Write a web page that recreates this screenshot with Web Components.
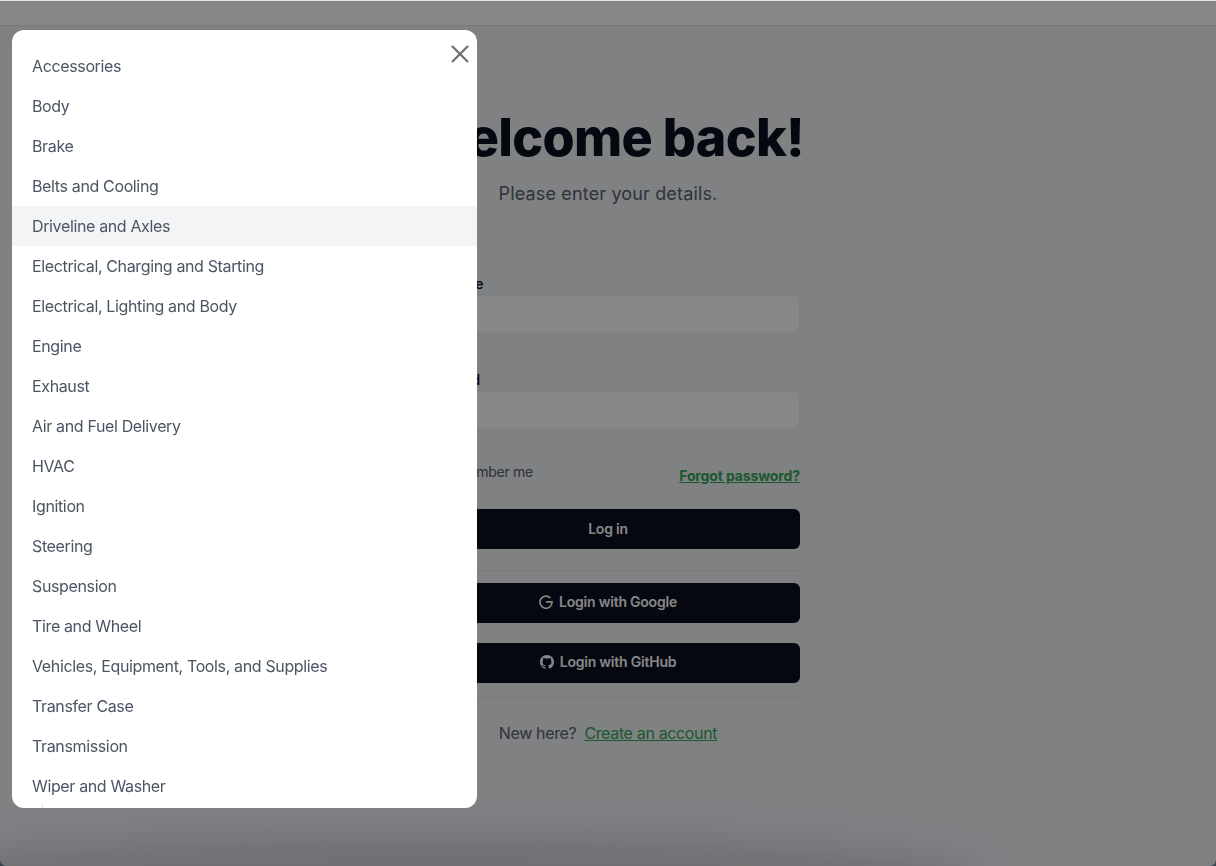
<!DOCTYPE html>
<html lang="en">
<head>
<meta charset="utf-8">
<title>Welcome back</title>
<style>
  html, body { margin: 0; height: 100%; overflow: hidden; }
  body { font-family: Inter, "Liberation Sans", sans-serif; background: #f1f3f8; }
</style>
</head>
<body>
<login-page></login-page>
<part-menu></part-menu>

<script>
const PARTS = [
  "Accessories", "Body", "Brake", "Belts and Cooling", "Driveline and Axles",
  "Electrical, Charging and Starting", "Electrical, Lighting and Body", "Engine",
  "Exhaust", "Air and Fuel Delivery", "HVAC", "Ignition", "Steering", "Suspension",
  "Tire and Wheel", "Vehicles, Equipment, Tools, and Supplies", "Transfer Case",
  "Transmission", "Wiper and Washer"
];

class LoginButton extends HTMLElement {
  constructor() {
    super();
    this.attachShadow({ mode: "open" });
    this.shadowRoot.innerHTML = `
      <style>
        :host { display: flex; box-sizing: border-box; align-items: center; justify-content: center; gap: 6px;
          height: 40px; padding-bottom: 3px; border-radius: 6px; background: #0a0e20; color: #fff;
          font-size: 14px; font-weight: 600; letter-spacing: -0.22px; }
        ::slotted(svg) { width: 14px; height: 14px; margin-top: 1px; }
      </style>
      <slot name="icon"></slot><span><slot></slot></span>
    `;
  }
}

class TextField extends HTMLElement {
  constructor() {
    super();
    this.attachShadow({ mode: "open" });
    this.shadowRoot.innerHTML = `
      <style>
        :host { display: block; }
        label { display: block; margin-bottom: 1px; font-size: 14px; line-height: 20px; font-weight: 500;
          letter-spacing: -0.2px; color: #0a0e20; }
        .box { height: 37px; border: 1px solid #edeef1; border-radius: 6px; background: #ffffff; }
      </style>
      <label><slot></slot></label>
      <div class="box"></div>
    `;
  }
}

class LoginForm extends HTMLElement {
  constructor() {
    super();
    this.attachShadow({ mode: "open" });
    this.shadowRoot.innerHTML = `
      <style>
        :host { display: block; width: 384px; }
        h1 { margin: 0; font-size: 52px; line-height: 56px; font-weight: 800;
          letter-spacing: -0.7px; color: #0a0e20; text-align: center; white-space: nowrap; }
        p { margin: 0; color: #586070; }
        .sub { margin-top: 14px; font-size: 18px; line-height: 28px; letter-spacing: 0.15px; text-align: center; }
        text-field { margin-top: 66px; }
        text-field + text-field { margin-top: 36px; }
        .row { display: flex; justify-content: space-between; margin-top: 32px; height: 24px; }
        .remember { display: flex; gap: 8px; font-size: 14px; line-height: 20px; letter-spacing: -0.28px; color: #586070; }
        .check { box-sizing: border-box; width: 16px; height: 16px; margin-top: 2px; border: 1px solid #d1d5db; border-radius: 3px; }
        a { color: #32a858; text-decoration: underline; }
        .forgot { font-size: 14px; line-height: 20px; font-weight: 700; letter-spacing: -0.12px; align-self: flex-end; }
        login-button.first { margin-top: 23px; padding-bottom: 1px; }
        hr { border: 0; height: 1px; background: #e8e9ec; margin: 0; }
        .rule-a { margin: 21px 0 12px; }
        .rule-b { margin: 13px 0 0; }
        .gap { margin-top: 20px; }
        .new { display: flex; justify-content: center; gap: 8px; margin-top: 24px;
          font-size: 16px; line-height: 24px; letter-spacing: -0.35px; color: #586070; }
      </style>
      <h1>Welcome back!</h1>
      <p class="sub">Please enter your details.</p>
      <text-field>Username</text-field>
      <text-field>Password</text-field>
      <div class="row">
        <div class="remember"><span class="check"></span><span>Remember me</span></div>
        <a class="forgot">Forgot password?</a>
      </div>
      <login-button class="first">Log in</login-button>
      <hr class="rule-a">
      <login-button>
        <svg slot="icon" viewBox="0 0 24 24" fill="none" stroke="currentColor" stroke-width="2.8"><path d="M19.6 5.2A10.4 10.4 0 1 0 22.4 12.6V11.8H12.2"/></svg>
        Login with Google
      </login-button>
      <login-button class="gap">
        <svg slot="icon" viewBox="0 0 16 16" fill="currentColor"><path d="M8 0C3.58 0 0 3.58 0 8c0 3.54 2.29 6.53 5.47 7.59.4.07.55-.17.55-.38 0-.19-.01-.82-.01-1.49-2.01.37-2.53-.49-2.69-.94-.09-.23-.48-.94-.82-1.13-.28-.15-.68-.52-.01-.53.63-.01 1.08.58 1.23.82.72 1.21 1.87.87 2.33.66.07-.52.28-.87.51-1.07-1.78-.2-3.64-.89-3.64-3.95 0-.87.31-1.59.82-2.15-.08-.2-.36-1.02.08-2.12 0 0 .67-.21 2.2.82.64-.18 1.32-.27 2-.27s1.36.09 2 .27c1.53-1.04 2.2-.82 2.2-.82.44 1.1.16 1.92.08 2.12.51.56.82 1.27.82 2.15 0 3.07-1.87 3.75-3.65 3.95.29.25.54.73.54 1.48 0 1.07-.01 1.93-.01 2.2 0 .21.15.46.55.38A8.013 8.013 0 0016 8c0-4.42-3.58-8-8-8z"/></svg>
        Login with GitHub
      </login-button>
      <hr class="rule-b">
      <div class="new"><span>New here?</span><a>Create an account</a></div>
    `;
  }
}

class LoginPage extends HTMLElement {
  constructor() {
    super();
    this.attachShadow({ mode: "open" });
    this.shadowRoot.innerHTML = `
      <style>
        :host { display: flex; flex-direction: column; height: 100vh; position: relative; overflow: hidden;
          background: #f1f3f8; }
        header { flex: none; height: 23px; margin-top: 2px; background: #ffffff; border-bottom: 1px solid #e6e6e6; }
        main { flex: 1; display: flex; justify-content: center; padding-top: 84px; }
        .glow { position: absolute; left: -120px; right: 236px; bottom: -60px; height: 90px;
          background: rgba(60, 66, 76, .18); border-radius: 50%; filter: blur(18px); }
      </style>
      <header></header>
      <main><login-form></login-form></main>
      <div class="glow"></div>
    `;
  }
}

class PartMenu extends HTMLElement {
  constructor() {
    super();
    this.attachShadow({ mode: "open" });
    const rows = PARTS.map((name) =>
      `<li class="${name === "Driveline and Axles" ? "hover" : ""}">${name}</li>`
    ).join("");
    this.shadowRoot.innerHTML = `
      <style>
        :host { display: block; position: fixed; inset: 0; background: rgba(0, 0, 0, .47); }
        :host::before { content: ""; position: absolute; left: 0; right: 0; top: 0; height: 1px; background: #e8e8e8; }
        :host::after { content: ""; position: absolute; left: 0; right: 0; bottom: 0; height: 5px;
          background:
            radial-gradient(circle 5px at 5px 0, transparent 4px, #3a4450 5px) left bottom / 5px 5px no-repeat,
            radial-gradient(circle 5px at 0 0, transparent 4px, #3a4450 5px) right bottom / 5px 5px no-repeat; }
        .panel { position: absolute; left: 12px; top: 30px; width: 465px; height: 778px; overflow: hidden;
          background: #fff; border-radius: 12px; }
        ul { list-style: none; margin: 0; padding: 16px 0 0; }
        li { height: 40px; padding-left: 20px; font-size: 16px; line-height: 40px; letter-spacing: -0.36px; color: #4b5563; }
        li.hover { background: #f3f4f6; }
        button { position: absolute; top: 15px; right: 8px; width: 18px; height: 18px; padding: 0;
          border: 0; background: none; color: #6f7177; }
        svg { display: block; width: 18px; height: 18px; }
        .sliver { position: absolute; left: 30px; bottom: 0; width: 1px; height: 5px; background: #e6e0e2; }
      </style>
      <div class="panel">
        <ul>${rows}</ul>
        <button aria-label="Close"><svg viewBox="0 0 18 18" fill="none" stroke="currentColor" stroke-width="2.3"><path d="M1 1l16 16M17 1L1 17"/></svg></button>
        <div class="sliver"></div>
      </div>
    `;
  }
}

customElements.define("login-button", LoginButton);
customElements.define("text-field", TextField);
customElements.define("login-form", LoginForm);
customElements.define("login-page", LoginPage);
customElements.define("part-menu", PartMenu);
</script>
</body>
</html>
